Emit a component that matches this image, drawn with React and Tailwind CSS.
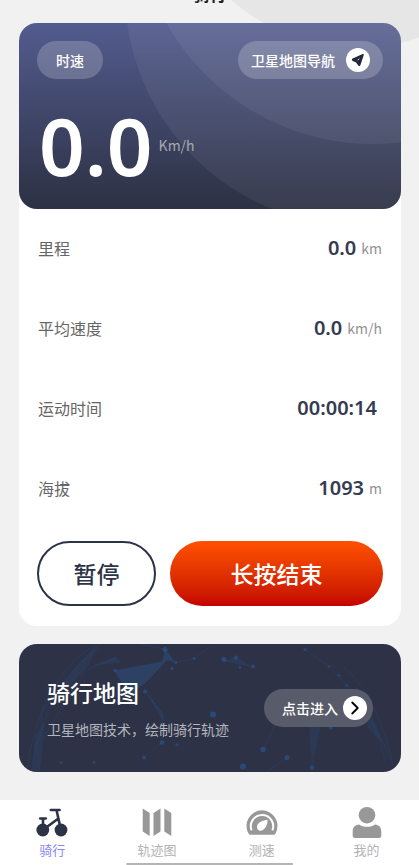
import React from "react";
import { ChevronRight } from "lucide-react";

const stats = [
  { label: "里程", value: "0.0", unit: "km" },
  { label: "平均速度", value: "0.0", unit: "km/h" },
  { label: "运动时间", value: "00:00:14", unit: "" },
  { label: "海拔", value: "1093", unit: "m" },
];

const tabs = [
  { label: "骑行", icon: BikeIcon, active: true },
  { label: "轨迹图", icon: TrackIcon },
  { label: "测速", icon: GaugeIcon },
  { label: "我的", icon: UserIcon },
];

// 32x34 tab icons
function BikeIcon() {
  return (
    <svg viewBox="0 0 32 34" className="h-[34px] w-8" fill="none" stroke="#2d3347" strokeLinecap="round">
      <circle cx="6.8" cy="25" r="6.4" fill="#2d3347" stroke="none" />
      <circle cx="25" cy="25" r="6.4" fill="#2d3347" stroke="none" />
      <path d="M4.200 13.500h5.600M7 13.500v10M14.800 5h8.800M20.500 5l4 18M22.400 13.500L9.500 23" strokeWidth="2.600" />
    </svg>
  );
}

function TrackIcon() {
  return (
    <svg viewBox="0 0 32 34" className="h-[34px] w-8" fill="#989898">
      <path d="M1.700 3.500L8.700 8V31L1.700 26.500z" />
      <path d="M19.500 3.500L12.500 8V31L19.500 26.500z" />
      <path d="M23.300 3.500L30.300 8V31L23.300 26.500z" />
    </svg>
  );
}

function GaugeIcon() {
  return (
    <svg viewBox="0 0 32 34" className="h-[34px] w-8">
      <path d="M4.500 29.800Q3 29.800 2.400 28.300A15.500 15.500 0 1 1 29.600 28.300Q29 29.800 27.500 29.800z" fill="#989898" />
      <path d="M5.600 25.300A11.200 11.200 0 1 1 26.400 25.300" fill="none" stroke="#fff" strokeWidth="2" />
      <path d="M21.500 14.800C17 15.300 12.300 17.200 11.200 20.500C10.400 23.800 12.300 26 14.800 25.700C18.800 25.200 21.800 20 21.500 14.800z" fill="#fff" />
    </svg>
  );
}

function UserIcon() {
  return (
    <svg viewBox="0 0 32 34" className="h-[34px] w-8" fill="#989898">
      <circle cx="16" cy="10.200" r="8.300" />
      <path d="M8 19.500c2 1.500 5 2.300 8 2.300s6-.8 8-2.300c4 .3 6.300 3 6.300 7V30.500a2.500 2.500 0 0 1-2.500 2.500H4.200A2.500 2.500 0 0 1 1.700 30.500v-4c0-4 2.300-6.700 6.300-7z" />
    </svg>
  );
}

function NavigateIcon() {
  return (
    <svg viewBox="0 0 24 24" className="size-6">
      <circle cx="12" cy="12" r="12" fill="#fff" />
      <path d="M17 6.700L7 11.200Q6.300 11.700 7 12.200L10.500 13.700L12.800 16.900Q13.300 17.500 13.700 16.800z" fill="#22283a" stroke="#22283a" strokeWidth="1.600" strokeLinejoin="round" />
      <path d="M13.300 10.600L11.600 12.300" stroke="#fff" strokeWidth="0.800" />
    </svg>
  );
}

function SpeedPanel() {
  return (
    <section className="relative overflow-hidden rounded-[18px] bg-linear-to-b from-[#535c8f] to-[#2d3144] px-[18px] pt-[18px] pb-6">
      <svg viewBox="0 0 382 187" preserveAspectRatio="xMaxYMin slice" className="absolute inset-0 size-full" fill="#fff">
        <circle cx="341" cy="-32" r="235" fillOpacity="0.060" />
        <circle cx="354" cy="-116" r="237" fillOpacity="0.060" />
      </svg>
      <div className="relative flex items-center justify-between">
        <span className="flex h-[38px] items-center rounded-full bg-white/20 px-[19px] text-sm font-medium text-white">时速</span>
        <button className="flex h-[38px] items-center gap-[11px] rounded-full bg-white/20 px-[13px] text-sm font-medium text-white">
          卫星地图导航
          <NavigateIcon />
        </button>
      </div>
      <div className="relative mt-[26px] flex items-center gap-[6px] pl-[2px]">
        <span className="font-['Noto_Sans',sans-serif] text-[80px] leading-[80px] font-semibold text-white">0.0</span>
        <span className="text-sm text-[#a5a8b3]">Km/h</span>
      </div>
    </section>
  );
}

function StatRow({ label, value, unit }) {
  return (
    <div className="flex h-20 items-center justify-between pb-[2px]">
      <dt className="text-base text-[#666]">{label}</dt>
      <dd className="flex items-center gap-[5px]">
        <span className="font-['Noto_Sans',sans-serif] text-xl font-semibold text-[#353b50]">{value}</span>
        <span className="text-sm text-[#929292]">{unit}</span>
      </dd>
    </div>
  );
}

// Faint globe of linked points behind the map banner
function GlobeLines() {
  return (
    <svg viewBox="0 0 382 129" preserveAspectRatio="xMidYMid slice" className="absolute inset-0 size-full" fill="none">
      <g stroke="#2b4a7a" strokeOpacity="0.350">
        <path d="M8 129C14 72 38 24 78 0M12 129C20 78 40 34 82 0M20 129L24 96L52 48L68 26L98 14M15 105L24 88L22 70L40 45L58 22L80 4" />
        <path d="M126 48L143 70L143 99L125 114M146 6L120 0M157 19L175 15L190 4M244 106L262 70M268 114L247 129" />
        <path d="M374 122C364 75 345 40 325 24M286 6L310 23L328 42L345 62M366 118C362 100 358 88 352 76" />
      </g>
      <g fill="#2c4f80" fillOpacity="0.500">
        <path d="M95 27L148 17L128 38L111 52z" />
        <path d="M146 5L157 20L150 17L143 18z" />
        <path d="M73 22L97 13L101 19z" fillOpacity="0.300" />
        <path d="M126 46L144 70L148 84L136 64z" fillOpacity="0.300" />
        <path d="M192 6L206 17L217 13L234 24L206 18z" fillOpacity="0.300" />
        <path d="M13 129L16 92L26 78L23 102L20 129z" fillOpacity="0.200" />
        <path d="M38 50L60 20L78 2L70 22L50 44z" fillOpacity="0.200" />
        <path d="M290 82L302 82L293 124z" fillOpacity="0.200" />
        <path d="M350 66L374 120L362 98L348 84z" fillOpacity="0.250" />
      </g>
      <g fill="#2b5287" fillOpacity="0.750">
        <circle cx="146" cy="6" r="2.500" />
        <circle cx="205" cy="16" r="2.500" />
        <circle cx="194" cy="71" r="3" />
        <circle cx="143" cy="99" r="2.300" />
        <circle cx="224" cy="123" r="3" />
        <circle cx="244" cy="106" r="2.700" />
        <circle cx="268" cy="114" r="2.500" />
        <circle cx="293" cy="124" r="2.300" />
        <circle cx="312" cy="84" r="2" />
        <circle cx="217" cy="14" r="2" />
        <circle cx="234" cy="23" r="2" />
        <circle cx="221" cy="24" r="1.300" />
        <circle cx="96" cy="27" r="1.700" />
        <circle cx="157" cy="19" r="1.500" />
        <circle cx="153" cy="25" r="1.500" />
        <circle cx="175" cy="15" r="1.500" />
        <circle cx="126" cy="48" r="2" />
        <circle cx="125" cy="114" r="2" />
        <circle cx="158" cy="101" r="1.500" />
        <circle cx="75" cy="119" r="1.300" />
        <circle cx="42" cy="119" r="1.300" />
        <circle cx="286" cy="6" r="1.500" />
        <circle cx="310" cy="23" r="1.300" />
        <circle cx="320" cy="32" r="1.300" />
        <circle cx="328" cy="42" r="1.300" />
      </g>
    </svg>
  );
}

function MapBanner() {
  return (
    <section className="relative mt-[18px] flex items-center justify-between overflow-hidden rounded-[18px] bg-[#2d3247] py-[31px] pr-7 pl-7">
      <GlobeLines />
      <div className="relative pb-[2px]">
        <h2 className="text-[23px] leading-[34px] font-medium text-white">骑行地图</h2>
        <p className="mt-[10px] text-sm text-[#b4b6bd]">卫星地图技术，绘制骑行轨迹</p>
      </div>
      <button className="relative flex h-[38px] shrink-0 items-center gap-[5px] rounded-full bg-[#5d606e]/90 pr-[6px] pl-[18px] text-sm font-medium text-white">
        点击进入
        <span className="flex size-6 items-center justify-center rounded-full bg-white text-black">
          <ChevronRight size={22} />
        </span>
      </button>
    </section>
  );
}

export default function App() {
  return (
    <div className="relative flex min-h-screen flex-col overflow-hidden bg-[#f1f1f1] font-['Noto_Sans_CJK_SC',sans-serif]">
      <svg viewBox="0 0 187 48" className="absolute top-0 right-0 h-12 w-[187px]">
        <circle cx="125" cy="-140" r="188" fill="#e6e6e6" />
      </svg>

      <header className="relative flex h-[23px] items-end justify-center pb-[17px]">
        <h1 className="text-[17px] leading-6 font-bold text-[#222]">骑行</h1>
      </header>

      <main className="relative flex-1 pr-[18px] pl-[19px]">
        <div className="rounded-[18px] bg-white">
          <SpeedPanel />
          <dl className="px-[19px]">
            {stats.map((item) => (
              <StatRow key={item.label} {...item} />
            ))}
          </dl>
          <div className="flex gap-[14px] px-[18px] pt-3 pb-5">
            <button className="h-[65px] w-[119px] rounded-full border-2 border-[#2d3347] text-[23px] font-medium text-[#2d3347]">暂停</button>
            <button className="h-[65px] flex-1 rounded-full bg-linear-to-b from-[#ff5000] to-[#c40000] text-[23px] font-medium text-white">长按结束</button>
          </div>
        </div>
        <MapBanner />
      </main>

      <nav className="relative mt-7 grid grid-cols-4 bg-white pt-[5px] pb-[5px]">
        {tabs.map(({ label, icon: Icon, active }) => (
          <a key={label} href="#" className={`flex flex-col items-center text-[13px] leading-[21px] ${active ? "text-[#8a86f5]" : "text-[#b3b3b3]"}`}>
            <Icon />
            {label}
          </a>
        ))}
        <div className="absolute bottom-0 left-1/2 h-[2px] w-2/5 -translate-x-1/2 rounded-full bg-[#b5b5b5]"></div>
      </nav>
    </div>
  );
}
